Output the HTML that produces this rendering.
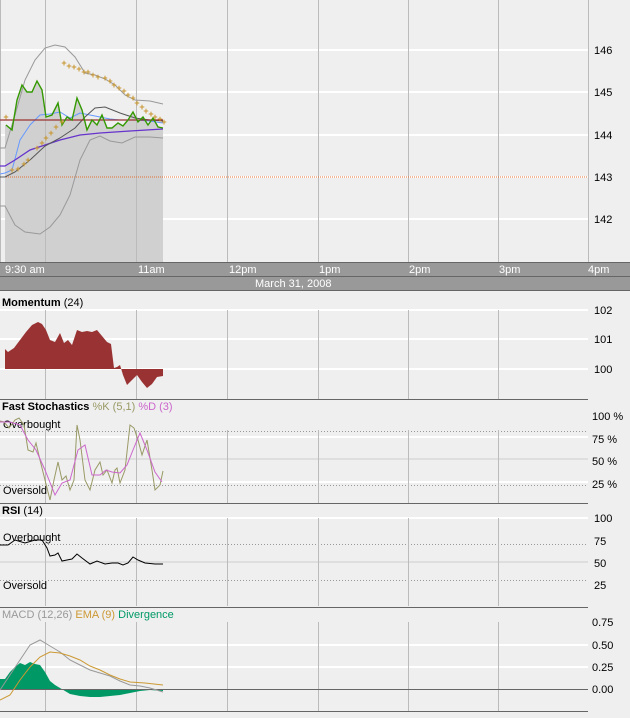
<!DOCTYPE html>
<html><head><meta charset="utf-8"><style>
html,body{margin:0;padding:0;background:#efefef;width:630px;height:718px;overflow:hidden}
svg{display:block;font-family:"Liberation Sans","DejaVu Sans",sans-serif;font-size:11px}
</style></head><body>
<svg width="630" height="718" viewBox="0 0 630 718">
<rect width="630" height="718" fill="#efefef"/>
<!-- main chart grid -->
<g stroke="#fff" stroke-width="2">
<line x1="0" y1="50" x2="588" y2="50"/><line x1="0" y1="92" x2="588" y2="92"/><line x1="0" y1="135" x2="588" y2="135"/><line x1="0" y1="177" x2="588" y2="177"/><line x1="0" y1="219" x2="588" y2="219"/>
</g>
<g stroke="#bbb" stroke-width="1">
<line x1="45.5" y1="0" x2="45.5" y2="262"/><line x1="136.5" y1="0" x2="136.5" y2="262"/><line x1="227.5" y1="0" x2="227.5" y2="262"/><line x1="318.5" y1="0" x2="318.5" y2="262"/><line x1="408.5" y1="0" x2="408.5" y2="262"/><line x1="498.5" y1="0" x2="498.5" y2="262"/><line x1="588.5" y1="0" x2="588.5" y2="262"/>
<line x1="0.5" y1="0" x2="0.5" y2="262"/>
</g>
<polygon fill="#d0d0d0" points="5,262 5,125 6,125 12,130 17,100 22,85 27,92 32,92 37,81 42,90 46,117 52,115 58,103 62,125 67,117 72,120 77,98 82,110 87,130 92,120 97,125 102,115 107,128 112,128 118,123 123,126 128,120 133,112 138,122 143,117 148,125 153,118 158,127 163,128 163,262"/>
<line x1="45.5" y1="0" x2="45.5" y2="262" stroke="#bbb"/><line x1="136.5" y1="0" x2="136.5" y2="262" stroke="#bbb"/>
<line x1="0" y1="177" x2="588" y2="177" stroke="#e07030" stroke-width="1" stroke-dasharray="1,1"/>
<g fill="none" stroke-width="1">
<polyline stroke="#999" points="0,148 5,148 15,115 25,80 35,60 45,48 55,45 65,47 75,57 85,73 95,75 105,79 115,85 125,95 135,100 150,101 163,104"/>
<polyline stroke="#999" points="0,206 5,206 15,225 25,232 40,234 50,227 60,215 70,195 80,160 90,140 100,136 110,141 122,143 135,137 150,137 163,138"/>
<polyline stroke="#6699ff" points="0,174 5,173 12,170 20,140 30,125 40,115 50,114 60,112 70,118 80,113 90,115 100,117 110,119 120,120 135,120 150,121 163,123"/>
<polyline stroke="#6633cc" stroke-width="1.3" points="0,166 5,166 15,160 30,150 45,145 60,140 80,135 100,133 130,131 163,129"/>
<polyline stroke="#555" points="0,177 5,177 15,172 30,160 45,146 60,138 75,128 85,117 95,108 105,107 120,113 135,118 150,120 163,121"/>
<line x1="0" y1="120" x2="163" y2="120" stroke="#993333" stroke-width="1.3"/>
<polyline stroke="#339900" stroke-width="1.4" points="6,125 12,130 17,100 22,85 27,92 32,92 37,81 42,90 46,117 52,115 58,103 62,125 67,117 72,120 77,98 82,110 87,130 92,120 97,125 102,115 107,128 112,128 118,123 123,126 128,120 133,112 138,122 143,117 148,125 153,118 158,127 163,128"/>
</g>
<g fill="#c8962d" font-size="9" font-weight="bold" text-anchor="middle">
<text x="6" y="120">+</text><text x="12" y="173">+</text><text x="18" y="172">+</text><text x="24" y="167">+</text><text x="28" y="163">+</text><text x="37" y="151">+</text><text x="42" y="146">+</text><text x="46" y="141">+</text><text x="51" y="136">+</text><text x="56" y="130">+</text><text x="62" y="125">+</text><text x="64" y="66">+</text><text x="69" y="69">+</text><text x="74" y="70">+</text><text x="79" y="72">+</text><text x="84" y="75">+</text><text x="88" y="75">+</text><text x="93" y="78">+</text><text x="98" y="80">+</text><text x="105" y="81">+</text><text x="110" y="84">+</text><text x="114" y="88">+</text><text x="119" y="91">+</text><text x="124" y="94">+</text><text x="128" y="98">+</text><text x="133" y="101">+</text><text x="137" y="106">+</text><text x="142" y="110">+</text><text x="146" y="114">+</text><text x="151" y="117">+</text><text x="155" y="120">+</text><text x="160" y="122">+</text><text x="164" y="125">+</text>
</g>
<g fill="#000"><text x="594" y="54">146</text><text x="594" y="96">145</text><text x="594" y="139">144</text><text x="594" y="181">143</text><text x="594" y="223">142</text></g>
<!-- time bar -->
<rect x="0" y="262" width="630" height="29" fill="#999"/>
<line x1="0" y1="262.5" x2="630" y2="262.5" stroke="#666"/><line x1="0" y1="276.5" x2="630" y2="276.5" stroke="#666"/><line x1="0" y1="290.5" x2="630" y2="290.5" stroke="#666"/>
<g fill="#fff"><text x="5" y="273">9:30 am</text><text x="138" y="273">11am</text><text x="229" y="273">12pm</text><text x="319" y="273">1pm</text><text x="409" y="273">2pm</text><text x="499" y="273">3pm</text><text x="588" y="273">4pm</text><text x="255" y="287">March 31, 2008</text></g>
<!-- Momentum -->
<text x="2" y="306" font-weight="bold">Momentum <tspan font-weight="normal">(24)</tspan></text>
<g stroke="#fff" stroke-width="2"><line x1="0" y1="310" x2="588" y2="310"/><line x1="0" y1="339" x2="588" y2="339"/><line x1="0" y1="369" x2="588" y2="369"/></g>
<g stroke="#bbb"><line x1="45.5" y1="310" x2="45.5" y2="399"/><line x1="136.5" y1="310" x2="136.5" y2="399"/><line x1="227.5" y1="310" x2="227.5" y2="399"/><line x1="318.5" y1="310" x2="318.5" y2="399"/><line x1="408.5" y1="310" x2="408.5" y2="399"/><line x1="498.5" y1="310" x2="498.5" y2="399"/></g>
<polygon fill="#993333" points="5,369 5,349 8,352 14,348 20,340 26,332 32,325 38,322 42,324 46,330 50,340 55,342 60,333 64,343 68,340 72,345 77,330 82,332 87,331 92,332 97,330 102,336 107,342 111,344 114,368 117,367 120,365 123,375 127,385 132,380 137,375 142,382 147,388 152,384 157,377 163,376 163,369"/>
<line x1="0" y1="399.5" x2="588" y2="399.5" stroke="#666"/>
<g fill="#000"><text x="594" y="314">102</text><text x="594" y="343">101</text><text x="594" y="373">100</text></g>
<!-- Stochastics -->
<text x="2" y="410" font-weight="bold">Fast Stochastics <tspan font-weight="normal" fill="#999966">%K (5,1)</tspan> <tspan font-weight="normal" fill="#cc66cc">%D (3)</tspan></text>
<g stroke="#fff" stroke-width="2"><line x1="0" y1="437" x2="588" y2="437"/><line x1="0" y1="482" x2="588" y2="482"/></g>
<line x1="0" y1="459" x2="588" y2="459" stroke="#ccc"/>
<g stroke="#999" stroke-dasharray="1,2"><line x1="0" y1="431.5" x2="588" y2="431.5"/><line x1="0" y1="485.5" x2="588" y2="485.5"/></g>
<g stroke="#bbb"><line x1="45.5" y1="430" x2="45.5" y2="503"/><line x1="136.5" y1="430" x2="136.5" y2="503"/><line x1="227.5" y1="430" x2="227.5" y2="503"/><line x1="318.5" y1="430" x2="318.5" y2="503"/><line x1="408.5" y1="430" x2="408.5" y2="503"/><line x1="498.5" y1="430" x2="498.5" y2="503"/></g>
<text x="3" y="428" fill="#000">Overbought</text><text x="3" y="494" fill="#000">Oversold</text>
<polyline fill="none" stroke="#999966" points="0,421 4,422 9,428 15,420 19,418 24,425 28,450 33,452 36,443 40,460 45,480 50,500 54,480 58,462 62,480 66,476 70,490 74,480 77,425 80,440 85,480 90,490 95,470 100,462 103,475 107,470 112,483 115,470 117,468 120,483 125,470 130,425 134,428 138,440 142,455 147,440 152,470 155,490 160,485 163,471"/>
<polyline fill="none" stroke="#cc66cc" points="0,422 10,422 20,425 28,440 36,450 45,470 55,495 62,483 70,480 78,450 85,445 92,475 100,475 106,470 112,472 120,473 127,465 133,450 140,433 147,450 155,472 162,482"/>
<line x1="0" y1="503.5" x2="588" y2="503.5" stroke="#666"/>
<g fill="#000"><text x="592" y="420">100 %</text><text x="592" y="443">75 %</text><text x="592" y="465">50 %</text><text x="592" y="488">25 %</text></g>
<!-- RSI -->
<text x="2" y="514" font-weight="bold">RSI <tspan font-weight="normal">(14)</tspan></text>
<g stroke="#fff" stroke-width="2"><line x1="0" y1="518" x2="588" y2="518"/></g>
<line x1="0" y1="562" x2="588" y2="562" stroke="#ccc"/>
<g stroke="#999" stroke-dasharray="1,2"><line x1="0" y1="544.5" x2="588" y2="544.5"/><line x1="0" y1="580.5" x2="588" y2="580.5"/></g>
<g stroke="#bbb"><line x1="45.5" y1="518" x2="45.5" y2="606"/><line x1="136.5" y1="518" x2="136.5" y2="606"/><line x1="227.5" y1="518" x2="227.5" y2="606"/><line x1="318.5" y1="518" x2="318.5" y2="606"/><line x1="408.5" y1="518" x2="408.5" y2="606"/><line x1="498.5" y1="518" x2="498.5" y2="606"/></g>
<text x="3" y="541" fill="#000">Overbought</text><text x="3" y="589" fill="#000">Oversold</text>
<polyline fill="none" stroke="#000" points="0,545 8,545 15,540 25,543 35,540 42,540 47,548 50,556 55,555 58,553 62,561 67,560 72,559 77,554 82,558 90,564 97,561 105,564 112,563 118,563 123,565 128,563 133,557 138,560 145,563 155,564 163,564"/>
<line x1="0" y1="607.5" x2="588" y2="607.5" stroke="#666"/>
<g fill="#000"><text x="594" y="522">100</text><text x="594" y="545">75</text><text x="594" y="567">50</text><text x="594" y="589">25</text></g>
<!-- MACD -->
<text x="2" y="618" fill="#999">MACD (12,26) <tspan fill="#cc9933">EMA (9)</tspan> <tspan fill="#009966">Divergence</tspan></text>
<g stroke="#fff" stroke-width="2"><line x1="0" y1="645" x2="588" y2="645"/><line x1="0" y1="667" x2="588" y2="667"/></g>
<g stroke="#bbb"><line x1="45.5" y1="622" x2="45.5" y2="711"/><line x1="136.5" y1="622" x2="136.5" y2="711"/><line x1="227.5" y1="622" x2="227.5" y2="711"/><line x1="318.5" y1="622" x2="318.5" y2="711"/><line x1="408.5" y1="622" x2="408.5" y2="711"/><line x1="498.5" y1="622" x2="498.5" y2="711"/></g>
<polygon fill="#009966" points="0,689 0,679 5,679 10,672 15,667 20,663 25,665 30,662 35,664 40,665 45,672 50,681 55,685 60,688 65,691 70,694 80,696 90,697 100,697 110,696 120,695 130,693 140,691 150,690 163,691 163,689"/>
<line x1="0" y1="689.5" x2="588" y2="689.5" stroke="#666"/>
<polyline fill="none" stroke="#999" points="0,690 10,675 20,660 30,645 40,640 50,646 60,652 70,660 80,665 90,670 100,673 110,676 120,681 130,685 140,686 150,688 163,692"/>
<polyline fill="none" stroke="#cc9933" points="0,700 10,695 20,680 30,667 40,657 50,652 60,653 70,656 80,660 90,666 100,670 110,675 120,679 130,682 145,683 163,685"/>
<line x1="0" y1="711.5" x2="588" y2="711.5" stroke="#666"/>
<g fill="#000"><text x="592" y="626">0.75</text><text x="592" y="649">0.50</text><text x="592" y="671">0.25</text><text x="592" y="693">0.00</text></g>
</svg>
</body></html>
